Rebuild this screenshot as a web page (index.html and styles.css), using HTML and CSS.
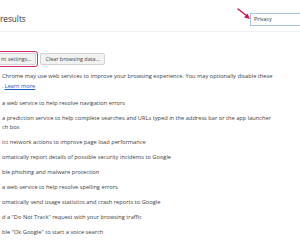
FILE: index.html
```html
<!DOCTYPE html>
<html>
<head>
<meta charset="utf-8">
<link rel="stylesheet" href="styles.css">
</head>
<body>
<div class="page">
  <header class="top">
    <h1 class="title">results</h1>
    <div class="search"><span>Privacy</span></div>
  </header>
  <div class="buttons">
    <span class="hl"><button class="btn">nt settings...</button></span>
    <button class="btn">Clear browsing data...</button>
  </div>
  <p class="intro">Chrome may use web services to improve your browsing experience. You may optionally disable these<br>.&#8201;<a class="link" href="#">Learn more</a></p>
  <ul class="opts">
    <li>a web service to help resolve navigation errors</li>
    <li>a prediction service to help complete searches and URLs typed in the address bar or the app launcher<br>ch box</li>
    <li>ict network actions to improve page load performance</li>
    <li>omatically report details of possible security incidents to Google</li>
    <li>ble phishing and malware protection</li>
    <li>a web service to help resolve spelling errors</li>
    <li>omatically send usage statistics and crash reports to Google</li>
    <li>d a "Do Not Track" request with your browsing traffic</li>
    <li>ble "Ok Google" to start a voice search</li>
  </ul>
  <svg class="arrow" width="16" height="14" viewBox="0 0 16 14">
    <line x1="1" y1="1" x2="10" y2="8" stroke="#d4145a" stroke-width="1.4" stroke-linecap="round"/>
    <polygon points="13,11 7,9.5 10.5,5.5" fill="#d4145a"/>
  </svg>
</div>
</body>
</html>
```
FILE: styles.css
```css
* { box-sizing: border-box; }
html, body {
  margin: 0;
  padding: 0;
  width: 300px;
  height: 250px;
  overflow: hidden;
  background: #fff;
}
.page {
  position: relative;
  width: 300px;
  height: 250px;
  font-family: "Open Sans", "Noto Sans", sans-serif;
  font-size: 5.7px;
  color: #404040;
}
.top {
  display: flex;
  align-items: center;
  height: 32px;
  padding-top: 9px;
  padding-bottom: 2px;
  border-bottom: 1px solid #f0f0f0;
}
.title {
  margin: 0;
  font-size: 8.2px;
  font-weight: 400;
  line-height: 10px;
  color: #333;
}
.search {
  margin-left: auto;
  margin-right: -10px;
  width: 60px;
  height: 13px;
  border: 1px solid #a9c3e6;
  display: flex;
  align-items: center;
  padding-left: 3px;
  color: #333;
  font-size: 5.4px;
}
.buttons {
  display: flex;
  align-items: center;
  gap: 2px;
  margin-top: 19px;
  height: 16px;
}
.hl {
  display: flex;
  margin-left: -6px;
  padding: 1px;
  border: 1.5px solid #d6286e;
  border-radius: 3px;
}
.btn {
  margin: 0;
  height: 12px;
  padding: 0 4px;
  border: 1px solid #d2d2d2;
  border-radius: 2px;
  background: #f2f2f2;
  font-family: inherit;
  font-size: 5.4px;
  color: #444;
  line-height: 10px;
}
.intro {
  margin: 4px 0 0;
  padding-left: 2px;
  line-height: 10px;
  white-space: nowrap;
}
.link {
  color: #1a5bc8;
  text-decoration: underline;
}
.opts {
  list-style: none;
  margin: 8px 0 0;
  padding: 0 0 0 2px;
  display: flex;
  flex-direction: column;
  gap: 6px;
}
.opts li {
  line-height: 9px;
  white-space: nowrap;
}
.arrow {
  position: absolute;
  left: 237px;
  top: 8px;
}
```
